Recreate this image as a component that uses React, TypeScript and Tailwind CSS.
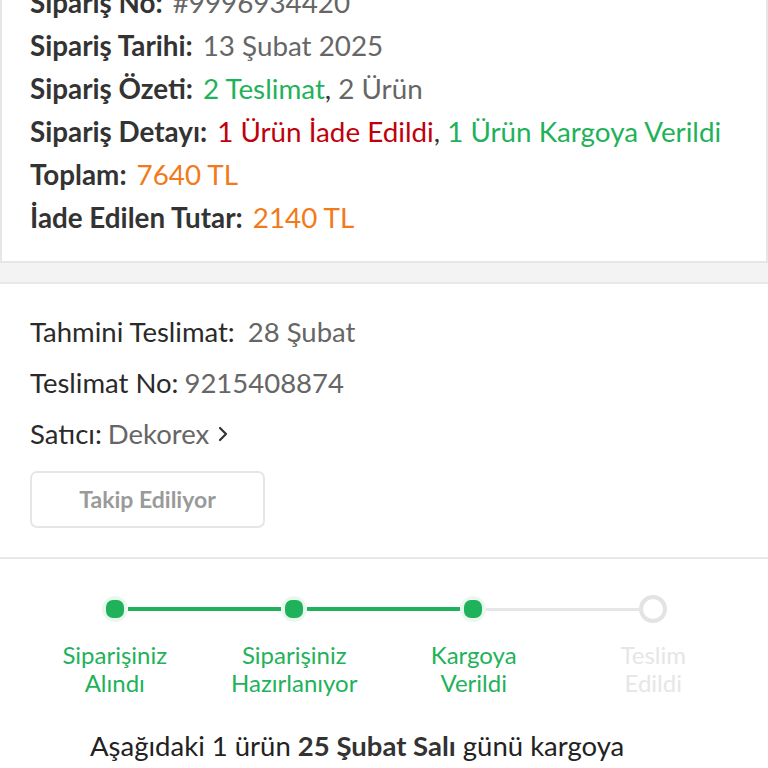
import React from "react";

const GREEN = "text-[#1fb25a]";

function Row({ label, children }: { label: string; children: React.ReactNode }) {
  return (
    <div className="h-[43px] flex items-center whitespace-nowrap">
      <span className="font-bold text-[#333333]">{label}</span>
      <span className="ml-[10px]">{children}</span>
    </div>
  );
}

function Row2({ label, children, gap = "ml-[6px]" }: { label: string; children: React.ReactNode; gap?: string }) {
  return (
    <div className="h-[51px] flex items-center whitespace-nowrap">
      <span className="text-[#2a2a2a]">{label}</span>
      <span className={`${gap} text-[#666666]`}>{children}</span>
    </div>
  );
}

const steps = [
  { l1: "Siparişiniz", l2: "Alındı", done: true },
  { l1: "Siparişiniz", l2: "Hazırlanıyor", done: true },
  { l1: "Kargoya", l2: "Verildi", done: true },
  { l1: "Teslim", l2: "Edildi", done: false },
];

function Dot({ done }: { done: boolean }) {
  if (done) {
    return (
      <div className="w-[26px] h-[26px] rounded-full bg-[#e9f8ef] flex items-center justify-center shrink-0">
        <div className="w-[18px] h-[18px] rounded-[7px] bg-[#1fb25a]" />
      </div>
    );
  }
  return <div className="w-[28px] h-[28px] rounded-full border-[4px] border-[#e3e3e3] bg-white shrink-0" />;
}

export default function App() {
  return (
    <div className="w-[768px] h-[768px] overflow-hidden bg-white font-['Lato','Noto_Sans',sans-serif] text-[27.8px]">
      <div className="mt-[-19px]">
        {/* top card */}
        <div className="border-x-2 border-b-2 border-[#e6e6e6] pl-[28px] pb-[22px]">
          <Row label="Sipariş No:">
            <span className="text-[#666666]">#9996934420</span>
          </Row>
          <Row label="Sipariş Tarihi:">
            <span className="text-[#666666]">13 Şubat 2025</span>
          </Row>
          <Row label="Sipariş Özeti:">
            <span className={GREEN}>2 Teslimat</span>
            <span className="text-[#333333]">,</span>
            <span className="text-[#666666]"> 2 Ürün</span>
          </Row>
          <Row label="Sipariş Detayı:">
            <span className="text-[#c0000b]">1 Ürün İade Edildi</span>
            <span className="text-[#333333]">,</span>
            <span className={GREEN}> 1 Ürün Kargoya Verildi</span>
          </Row>
          <Row label="Toplam:">
            <span className="text-[#f27a1a]">7640 TL</span>
          </Row>
          <Row label="İade Edilen Tutar:">
            <span className="text-[#f27a1a]">2140 TL</span>
          </Row>
        </div>
        <div className="h-[21px] bg-[#f3f3f3] border-b-2 border-[#e8e8e8]" />

        {/* delivery section */}
        <div className="pl-[30px] pt-[22px] pb-[29px] border-b-2 border-[#e8e8e8] text-[27.5px]">
          <Row2 label="Tahmini Teslimat:" gap="ml-[13px]">28 Şubat</Row2>
          <Row2 label="Teslimat No:">9215408874</Row2>
          <Row2 label="Satıcı:">
            <span className="inline-flex items-center">
              Dekorex
              <svg width="14" height="18" viewBox="0 0 14 18" className="ml-[7px]">
                <path d="M4 3 L10 9 L4 15" fill="none" stroke="#333333" strokeWidth="2.2" strokeLinecap="round" strokeLinejoin="round" />
              </svg>
            </span>
          </Row2>
          <div className="mt-[12px] w-[235px] h-[57px] rounded-[7px] border-2 border-[#e6e6e6] flex items-center justify-center text-[23px] font-bold text-[#9a9a9a]">
            Takip Ediliyor
          </div>
        </div>

        {/* stepper */}
        <div className="pt-[36px]">
          <div className="flex items-center pl-[102px] pr-[101px]">
            <Dot done />
            <div className="flex-1 h-[4px] bg-[#1fb25a]" />
            <Dot done />
            <div className="flex-1 h-[4px] bg-[#1fb25a]" />
            <Dot done />
            <div className="flex-1 h-[3px] bg-[#e6e6e6]" />
            <Dot done={false} />
          </div>
          <div className="grid grid-cols-4 pl-[25px] pr-[25px] mt-[18px]">
            {steps.map((s, i) => (
              <div
                key={i}
                className={`text-center text-[24px] leading-[28px] ${s.done ? GREEN : "text-[#e6e6e6]"}`}
              >
                <div>{s.l1}</div>
                <div>{s.l2}</div>
              </div>
            ))}
          </div>
        </div>

        <div className="pl-[90px] w-[700px] mt-[29px] text-[27.5px] leading-[40px] text-[#222222]">
          Aşağıdaki 1 ürün <span className="font-bold text-[#333333]">25 Şubat Salı</span> günü kargoya verilecektir.
        </div>
      </div>
    </div>
  );
}
